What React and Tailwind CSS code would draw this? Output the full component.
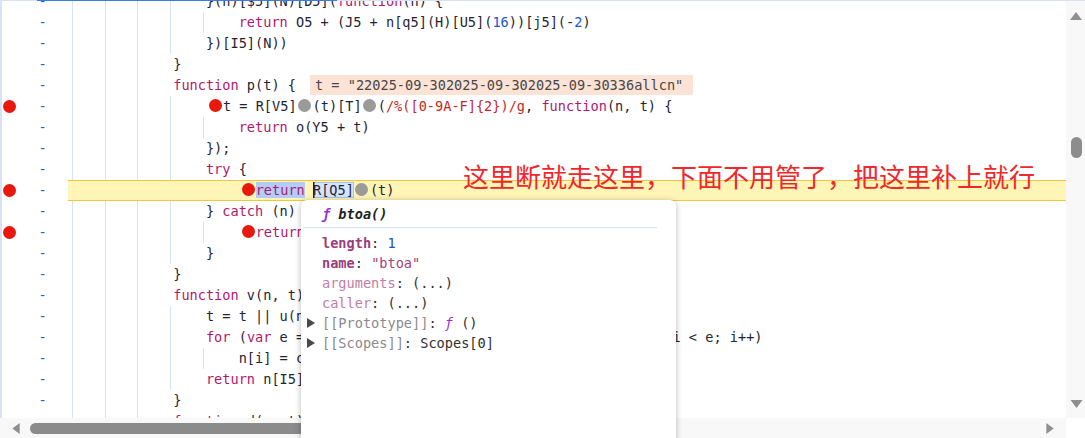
import React from 'react';

const K = ({ children }) => <span className="text-[#b0186d]">{children}</span>;
const N = ({ children }) => <span className="text-[#1a55d0]">{children}</span>;
const Rx = ({ children }) => <span className="text-[#c5281f]">{children}</span>;
const Bp = () => <span className="inline-block w-[13px] h-[13px] rounded-full bg-[#e8180c] align-middle ml-[3px] mr-[1px] -mt-[2px]" />;
const Gp = () => <span className="inline-block w-[13px] h-[13px] rounded-full bg-[#9a9a9a] align-middle ml-[1px] mr-[2px] -mt-[2px]" />;

const lines = [
  { lvl: 4, c: <>{'}(n)[$5](N)[D5]('}<K>function</K>{'(n) {'}</> },
  { lvl: 5, c: <><K>return</K>{' O5 + (J5 + n[q5](H)[U5]('}<N>16</N>{'))[j5](-'}<N>2</N>{')'}</> },
  { lvl: 4, c: <>{'})[I5](N))'}</> },
  { lvl: 3, c: <>{'}'}</> },
  {
    lvl: 3,
    c: (
      <>
        <K>function</K>{' p(t) {'}
        <span className="inline-block ml-[14px] pl-[5px] pr-[10px] bg-[#fde3d6] text-[#474747] leading-[20px]">
          {'t = "22025-09-302025-09-302025-09-30336allcn"'}
        </span>
      </>
    ),
  },
  {
    lvl: 4,
    bp: true,
    c: <><Bp />{'t = R[V5]'}<Gp />{'(t)[T]'}<Gp />{'('}<Rx>{'/%([0-9A-F]{2})/g'}</Rx>{', '}<K>function</K>{'(n, t) {'}</>,
  },
  { lvl: 5, c: <><K>return</K>{' o(Y5 + t)'}</> },
  { lvl: 4, c: <>{'});'}</> },
  { lvl: 4, c: <><K>try</K>{' {'}</> },
  {
    lvl: 5,
    bp: true,
    hl: true,
    c: (
      <>
        <Bp />
        <span className="bg-[#b3cdf6]"><K>return</K></span>{' '}
        <span className="bg-[#d6e4fb] shadow-[inset_1.5px_0_0_#1f1f1f,inset_0_0_0_1px_#a6c3f2]">R[Q5]</span>
        <Gp />{'(t)'}
      </>
    ),
  },
  { lvl: 4, c: <>{'} '}<K>catch</K>{' (n) {'}</> },
  { lvl: 5, bp: true, c: <><Bp /><K>return</K>{' L5(n)'}</> },
  { lvl: 4, c: <>{'}'}</> },
  { lvl: 3, c: <>{'}'}</> },
  { lvl: 3, c: <><K>function</K>{' v(n, t) {'}</> },
  { lvl: 4, c: <>{'t = t || u(n[X5]);'}</> },
  { lvl: 4, c: <><K>for</K>{' ('}<K>var</K>{' e = n[X5], i = 0, r = t[X5], o = 0, a = r - '}<N>10</N>{'; i < e; i++)'}</> },
  { lvl: 5, c: <>{'n[i] = c(n[i], t);'}</> },
  { lvl: 4, c: <><K>return</K>{' n[I5](W5)'}</> },
  { lvl: 3, c: <>{'}'}</> },
  { lvl: 3, c: <><K>function</K>{' d(n, t) {'}</> },
];

const CodeRow = ({ line }) => (
  <div className="flex h-[21px]">
    <div className="w-[66px] shrink-0 flex items-center">
      <div className="w-[36.5px] pl-[1px] flex items-center">
        {line.bp && <span className="w-[13px] h-[13px] rounded-full bg-[#e8180c]" />}
      </div>
      <span className="text-[#1d63d8]">-</span>
    </div>
    <div className={`flex-1 min-w-0 flex items-center pl-[7px] ${line.hl ? 'bg-[#fef5b6] border-y border-[#f1c53e]' : ''}`}>
      {Array.from({ length: line.lvl }).map((_, i) => (
        <span key={i} className="relative shrink-0 w-[4ch] self-stretch">
          {!line.hl && <span className="absolute -left-[3px] top-0 bottom-0 border-l border-[#d5e2f7]" />}
        </span>
      ))}
      <span className="whitespace-pre">{line.c}</span>
    </div>
  </div>
);

const Tri = ({ dir, className }) => {
  const pts = {
    up: '0,8 6,0 12,8',
    down: '0,0 12,0 6,8',
    left: '8,0 8,12 0,6',
    right: '0,0 8,6 0,12',
  }[dir];
  const box = dir === 'up' || dir === 'down' ? '0 0 12 8' : '0 0 8 12';
  return (
    <svg viewBox={box} className={className}>
      <polygon points={pts} fill="#8f8f8f" />
    </svg>
  );
};

export default function App() {
  return (
    <div className="relative w-[1085px] h-[438px] overflow-hidden bg-white font-['DejaVu_Sans_Mono',monospace] text-[13.6px] leading-[21px] text-[#1f2433]">
      <div className="flex h-full">
        <div className="flex-1 min-w-0 flex flex-col">
          {/* code */}
          <div className="flex-1 overflow-hidden border-l-2 border-[#d5e2f7]">
            <div className="-mt-[9.5px]">
              {lines.map((l, i) => (
                <CodeRow key={i} line={l} />
              ))}
            </div>
          </div>
          {/* horizontal scrollbar */}
          <div className="h-[20px] shrink-0 bg-[#f8f8f8] flex items-center pl-[12px] pr-[12px]">
            <Tri dir="left" className="w-[8px] h-[11px]" />
            <div className="ml-[10px] w-[570px] h-[11px] rounded-full bg-[#8b8b8b]" />
            <div className="flex-1" />
            <Tri dir="right" className="w-[8px] h-[11px]" />
          </div>
        </div>
        {/* vertical scrollbar */}
        <div className="w-[19px] shrink-0 flex flex-col">
          <div className="flex-1 bg-[#f8f8f8] flex flex-col items-center pt-[12px] pb-[10px] pl-[1px]">
            <Tri dir="up" className="w-[12px] h-[8px]" />
            <div className="mt-[117px] w-[11px] h-[21px] rounded-full bg-[#8d8d8d]" />
            <div className="flex-1" />
            <Tri dir="down" className="w-[13px] h-[8px]" />
          </div>
          <div className="h-[20px] bg-white" />
        </div>
      </div>

      {/* top border */}
      <div className="absolute left-0 top-0 w-full h-px bg-[#d5e2f7]" />
      <div className="absolute left-[37px] top-0 w-[300px] h-px bg-[#3d7be0]" />

      {/* annotation */}
      <div className="absolute left-[463px] top-[161px] text-[26px] leading-[30px] text-[#f2262b] font-['Noto_Sans_CJK_SC','Noto_Sans',sans-serif] whitespace-nowrap">
        这里断就走这里，下面不用管了，把这里补上就行
      </div>

      {/* hover popup */}
      <div className="absolute left-[301px] top-[200px] w-[375px] h-[260px] bg-white rounded-t-[6px] shadow-[0_1px_6px_rgba(0,0,0,0.28)] leading-[20px]">
        <div className="h-[27px] flex items-center pl-[21px] font-bold italic whitespace-pre">
          <span className="text-[#9a32cd]">ƒ</span>
          <span className="text-[#1f1f1f]"> btoa()</span>
        </div>
        <div className="ml-[2px] mr-[19px] border-t border-[#d3e0f6]" />
        <div className="pt-[5px] whitespace-pre">
          <div className="pl-[21px]">
            <span className="font-bold text-[#9c3d7b]">length</span>
            <span className="text-[#303030]">: </span>
            <span className="text-[#1c4fbf]">1</span>
          </div>
          <div className="pl-[21px]">
            <span className="font-bold text-[#9c3d7b]">name</span>
            <span className="text-[#303030]">: </span>
            <span className="text-[#a8407a]">"btoa"</span>
          </div>
          <div className="pl-[21px]">
            <span className="text-[#c17da6]">arguments</span>
            <span className="text-[#303030]">: (...)</span>
          </div>
          <div className="pl-[21px]">
            <span className="text-[#c17da6]">caller</span>
            <span className="text-[#303030]">: (...)</span>
          </div>
          <div className="flex items-center pl-[6px]">
            <svg viewBox="0 0 8 10" className="w-[8px] h-[10px]">
              <polygon points="0,0 8,5 0,10" fill="#4a4a4a" />
            </svg>
            <span className="ml-[7px] text-[#8a8a8a]">[[Prototype]]</span>
            <span className="text-[#303030]">: </span>
            <span className="italic text-[#9a32cd]">ƒ</span>
            <span className="text-[#303030]"> ()</span>
          </div>
          <div className="flex items-center pl-[6px]">
            <svg viewBox="0 0 8 10" className="w-[8px] h-[10px]">
              <polygon points="0,0 8,5 0,10" fill="#4a4a4a" />
            </svg>
            <span className="ml-[7px] text-[#8a8a8a]">[[Scopes]]</span>
            <span className="text-[#303030]">: Scopes[0]</span>
          </div>
        </div>
      </div>
    </div>
  );
}
